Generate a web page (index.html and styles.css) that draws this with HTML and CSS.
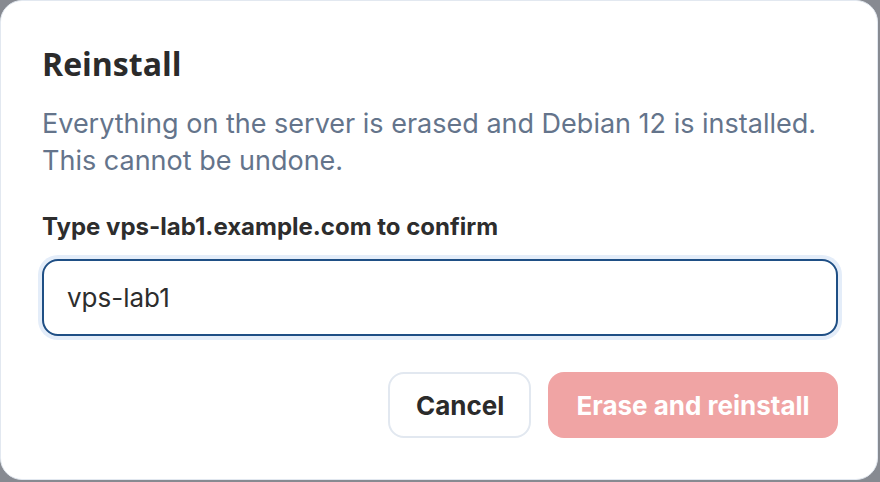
FILE: index.html
```html
<!DOCTYPE html>
<html>
<head>
<meta charset="utf-8">
<title>Reinstall</title>
<link rel="stylesheet" href="styles.css">
</head>
<body>
<div class="dialog">
  <h2 class="dialog-title">Reinstall</h2>
  <p class="dialog-text">Everything on the server is erased and Debian 12 is installed.<br>This cannot be undone.</p>
  <label class="confirm-label" for="confirm">Type vps-lab1.example.com to confirm</label>
  <input type="text" id="confirm" class="confirm-input" value="vps-lab1">
  <div class="dialog-actions">
    <button class="btn btn-cancel">Cancel</button>
    <button class="btn btn-danger" disabled>Erase and reinstall</button>
  </div>
</div>
</body>
</html>
```

FILE: styles.css
```css
*{margin:0; padding:0; box-sizing:border-box;}
body{
	width:880px;
	height:482px;
	background-color:#878a91;
	font-family:"Inter", "Liberation Sans", sans-serif;
	color:#2d2d2d;
	overflow:hidden;
}
.dialog{
	display:flex;
	flex-direction:column;
	width:878px;
	height:480px;
	padding:45px 39px 0 41px;
	background-color:#fff;
	border:1px solid #e2e8f0;
	border-radius:22px;
}
.dialog-title{
	font-family:"Open Sans", sans-serif;
	font-size:32px;
	line-height:36px;
	font-weight:700;
	color:#2b2b2b;
}
.dialog-text{
	margin-top:23px;
	font-size:27px;
	line-height:37px;
	color:#64748b;
}
.confirm-label{
	display:block;
	margin-top:33px;
	font-size:24px;
	line-height:29px;
	font-weight:700;
	color:#2d2d2d;
}
.confirm-input{
	display:block;
	width:796px;
	height:77px;
	margin-top:18px;
	padding:0 23px;
	border:2px solid #1f4f85;
	border-radius:16px;
	box-shadow:0 0 0 4px #e4edf9;
	font-family:"Inter", sans-serif;
	font-size:26px;
	color:#2d2d2d;
	outline:none;
	background:#fff;
}
.dialog-actions{
	display:flex;
	justify-content:flex-end;
	gap:17px;
	margin-top:36px;
}
.btn{
	height:66px;
	padding:0 26px;
	border-radius:16px;
	font-family:"Inter", sans-serif;
	font-size:26px;
	font-weight:700;
}
.btn-cancel{
	width:143px;
	background:#fff;
	border:2px solid #e2e8f0;
	color:#2b2b2b;
}
.btn-danger{
	width:290px;
	background:#f0a4a4;
	border:none;
	color:#fff;
	padding:0 28px;
}
```
